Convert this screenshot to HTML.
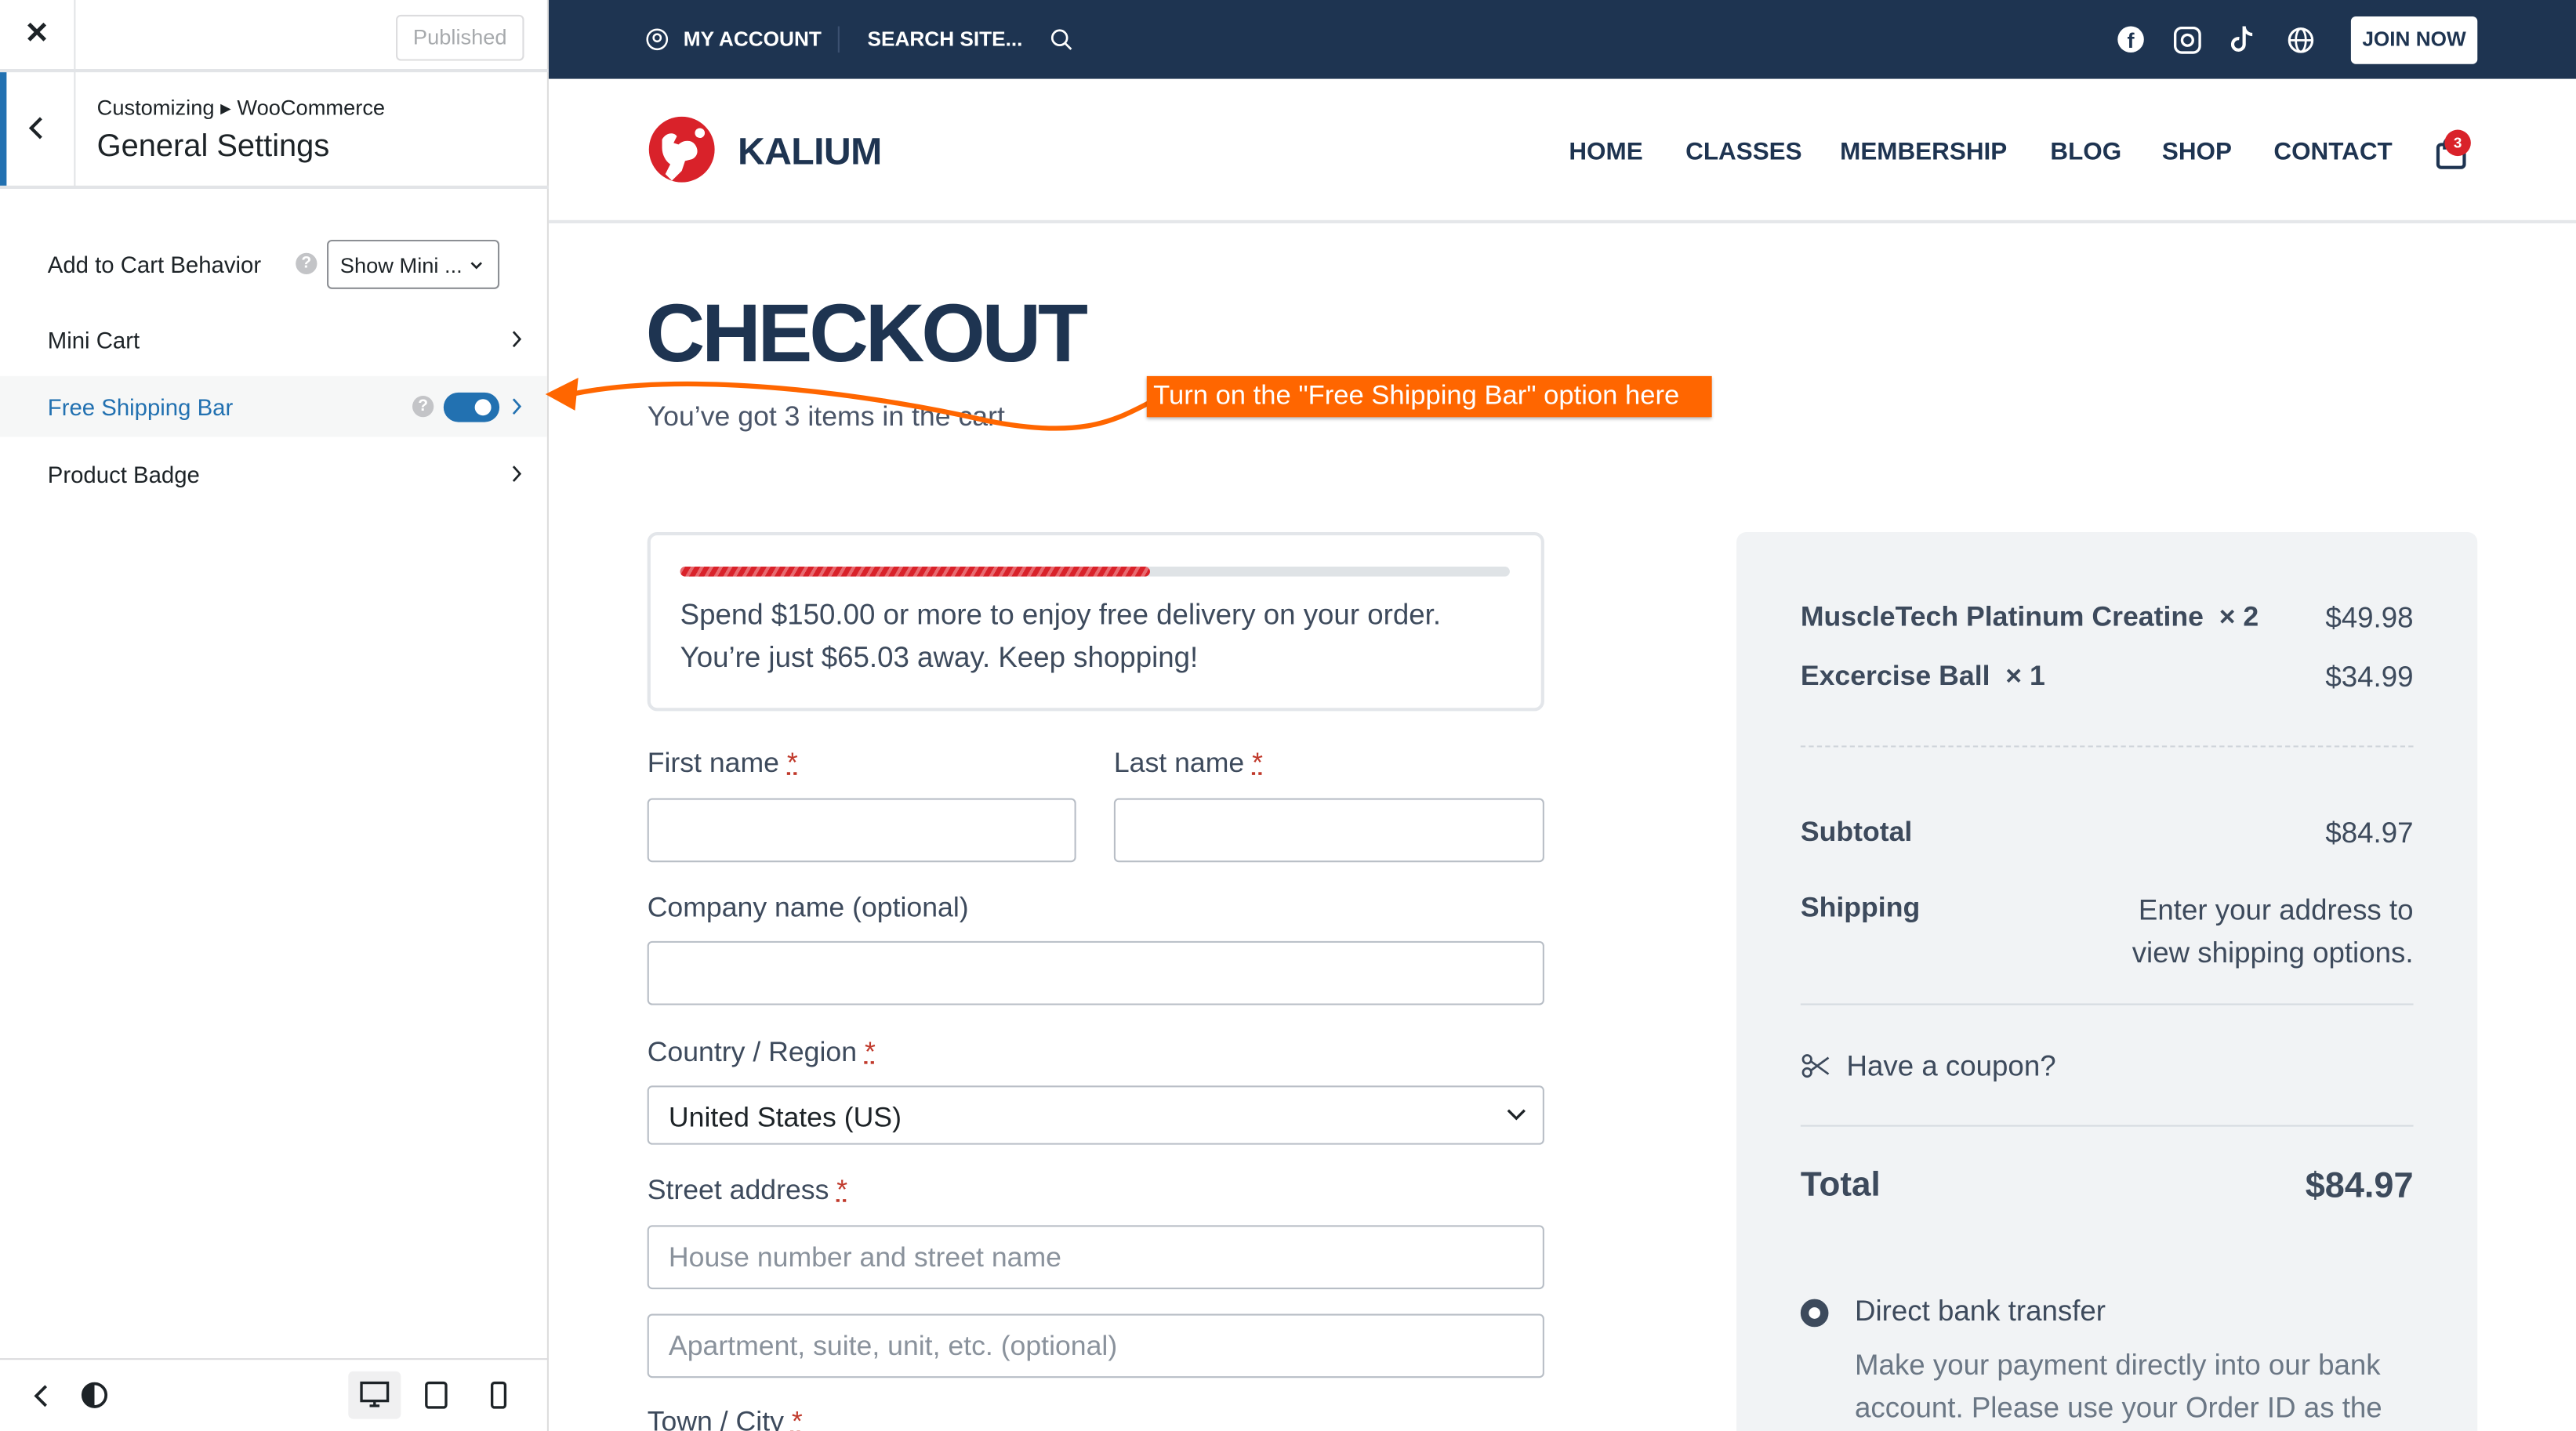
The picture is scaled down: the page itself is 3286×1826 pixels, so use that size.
<!DOCTYPE html>
<html><head><meta charset="utf-8"><style>
*{box-sizing:border-box;margin:0;padding:0}
html,body{width:3286px;height:1826px;overflow:hidden;background:#fff}
#w{width:1568px;height:872px;transform:scale(2.09566);transform-origin:0 0;position:relative;font-family:"Liberation Sans",sans-serif;overflow:hidden}
.a{position:absolute}
.side{left:0;top:0;width:334px;height:872px;background:#fff;border-right:1px solid #ddd}
.nav{color:#1e3451;font-weight:bold;font-size:15px;top:84px}
.lbl{font-size:17px;color:#3d4a5c}
.inp{border:1px solid #b8bec6;border-radius:3px;background:#fff;height:39px}
.ph{font-size:17px;color:#8a929c}
.rt{font-size:17px;color:#3d4a5c}
.req{color:#c0392b;text-decoration:underline dotted}
</style></head><body><div id="w">
<div class="a side">
 <div class="a" style="left:0;top:0;width:334px;height:44px;border-bottom:2px solid #e2e4e7"></div>
 <div class="a" style="left:45px;top:0;width:1px;height:114px;background:#e2e4e7"></div>
 <div class="a" style="left:15px;top:10px;font-size:18px;color:#1d2327;font-weight:bold">✕</div>
 <div class="a" style="left:241px;top:9px;width:78px;height:28px;border:1px solid #dcdcde;border-radius:3px;color:#a7aaad;font-size:13px;text-align:center;line-height:26px">Published</div>
 <div class="a" style="left:0;top:44px;width:4px;height:70px;background:#2271b1"></div>
 <div class="a" style="left:0;top:113px;width:334px;height:2px;background:#e2e4e7"></div>
 <svg class="a" style="left:16px;top:70px" width="12" height="16" viewBox="0 0 12 16"><path d="M9 2 L3 8 L9 14" stroke="#1d2327" stroke-width="2" fill="none"/></svg>
 <div class="a" style="left:59px;top:58px;font-size:13px;color:#1d2327">Customizing ▸ WooCommerce</div>
 <div class="a" style="left:59px;top:79px;font-size:19px;color:#1d2327">General Settings</div>
 <div class="a" style="left:29px;top:153px;font-size:14px;color:#1d2327">Add to Cart Behavior</div>
 <div class="a" style="left:180px;top:154px;width:13px;height:13px;border-radius:50%;background:#c3c4c7;color:#fff;font-size:10px;text-align:center;line-height:13px;font-weight:bold">?</div>
 <div class="a" style="left:199px;top:146px;width:105px;height:30px;border:1px solid #8c8f94;border-radius:3px;font-size:13px;color:#1d2327;padding:7px 0 0 7px">Show Mini ...<svg style="position:absolute;right:9px;top:12px" width="8" height="6"><path d="M1 1l3 3 3-3" stroke="#1d2327" stroke-width="1.3" fill="none"/></svg></div>
 <div class="a" style="left:29px;top:199px;font-size:14px;color:#1d2327">Mini Cart</div>
 <svg class="a" style="left:311px;top:201px" width="7" height="11"><path d="M1.5 1l4 4.5-4 4.5" stroke="#1d2327" stroke-width="1.3" fill="none"/></svg>
 <div class="a" style="left:0;top:229px;width:333px;height:37px;background:#f6f7f7"></div>
 <div class="a" style="left:29px;top:240px;font-size:14px;color:#2271b1">Free Shipping Bar</div>
 <div class="a" style="left:251px;top:241px;width:13px;height:13px;border-radius:50%;background:#c3c4c7;color:#fff;font-size:10px;text-align:center;line-height:13px;font-weight:bold">?</div>
 <div class="a" style="left:270px;top:239px;width:34px;height:18px;border-radius:9px;background:#2271b1"><div class="a" style="left:19px;top:4px;width:10px;height:10px;border-radius:50%;background:#fff"></div></div>
 <svg class="a" style="left:311px;top:242px" width="7" height="11"><path d="M1.5 1l4 4.5-4 4.5" stroke="#2271b1" stroke-width="1.3" fill="none"/></svg>
 <div class="a" style="left:29px;top:281px;font-size:14px;color:#1d2327">Product Badge</div>
 <svg class="a" style="left:311px;top:283px" width="7" height="11"><path d="M1.5 1l4 4.5-4 4.5" stroke="#1d2327" stroke-width="1.3" fill="none"/></svg>
 <div class="a" style="left:0;top:827px;width:334px;height:1px;background:#dcdcde"></div>
 <svg class="a" style="left:19px;top:842px" width="12" height="16"><path d="M9 2 L3 8 L9 14" stroke="#1d2327" stroke-width="1.8" fill="none"/></svg>
 <svg class="a" style="left:49px;top:841px" width="17" height="17"><circle cx="8.5" cy="8.5" r="7" stroke="#1d2327" stroke-width="1.8" fill="none"/><path d="M8.5 1.5 A7 7 0 0 0 8.5 15.5Z" fill="#1d2327"/></svg>
 <div class="a" style="left:212px;top:835px;width:32px;height:29px;background:#f0f0f1;border-radius:3px"></div>
 <svg class="a" style="left:219px;top:841px" width="18" height="17"><rect x="1" y="1" width="16" height="11" stroke="#1d2327" stroke-width="1.6" fill="none"/><path d="M6 15h6M9 12v3" stroke="#1d2327" stroke-width="1.6"/></svg>
 <svg class="a" style="left:258px;top:841px" width="15" height="17"><rect x="1.5" y="1" width="12" height="15" rx="1.5" stroke="#1d2327" stroke-width="1.6" fill="none"/></svg>
 <svg class="a" style="left:298px;top:841px" width="12" height="17"><rect x="1.5" y="1" width="8" height="15" rx="1.5" stroke="#1d2327" stroke-width="1.6" fill="none"/></svg>
</div>
<div class="a" style="left:334px;top:0;width:1234px;height:48px;background:#1e3451"></div>
<svg class="a" style="left:393px;top:17px" width="14" height="14"><circle cx="7" cy="7" r="6" stroke="#fff" stroke-width="1.2" fill="none"/><circle cx="7" cy="6" r="2.2" stroke="#fff" stroke-width="1.2" fill="none"/></svg>
<div class="a" style="left:416px;top:17px;color:#fff;font-weight:bold;font-size:12.5px">MY ACCOUNT</div>
<div class="a" style="left:510px;top:16px;width:1px;height:16px;background:#3b5070"></div>
<div class="a" style="left:528px;top:17px;color:#fff;font-weight:bold;font-size:12.5px">SEARCH SITE...</div>
<svg class="a" style="left:639px;top:17px" width="14" height="14"><circle cx="6" cy="6" r="4.5" stroke="#fff" stroke-width="1.3" fill="none"/><path d="M9.5 9.5 L13 13" stroke="#fff" stroke-width="1.3"/></svg>
<div class="a" style="left:1289px;top:16px;width:16px;height:16px;border-radius:50%;background:#fff;color:#1e3451;font-weight:bold;font-size:13px;text-align:center;line-height:18px">f</div>
<svg class="a" style="left:1323px;top:16px" width="17" height="17"><rect x="1" y="1" width="15" height="15" rx="4" stroke="#fff" stroke-width="1.6" fill="none"/><circle cx="8.5" cy="8.5" r="3.3" stroke="#fff" stroke-width="1.6" fill="none"/></svg>
<svg class="a" style="left:1358px;top:15px" width="15" height="18"><path d="M8 1v11a3.5 3.5 0 1 1-3-3.5M8 1c0 3 2.5 5 5 5" stroke="#fff" stroke-width="2" fill="none"/></svg>
<svg class="a" style="left:1392px;top:16px" width="17" height="17"><circle cx="8.5" cy="8.5" r="7" stroke="#fff" stroke-width="1.5" fill="none"/><ellipse cx="8.5" cy="8.5" rx="3" ry="7" stroke="#fff" stroke-width="1.3" fill="none"/><path d="M1.5 8.5h14" stroke="#fff" stroke-width="1.3"/></svg>
<div class="a" style="left:1431px;top:10px;width:77px;height:29px;background:#fff;border-radius:3px;color:#1e3451;font-weight:bold;font-size:12.5px;text-align:center;line-height:29px">JOIN NOW</div>
<div class="a" style="left:334px;top:134px;width:1234px;height:2px;background:#e5e7ea"></div>
<svg class="a" style="left:393px;top:71px" width="44" height="42" viewBox="0 0 44 42"><circle cx="22" cy="20" r="20" fill="#d9222a"/><path d="M10 14c2-4 7-5 9-2l-2 4 3 1c3-3 8-3 10 0 3 4 1 8-2 9l-4 1-2 6 -6 6-4-4 3-6c-3-2-5-6-5-10z" fill="#fff"/><circle cx="33" cy="10" r="3" fill="#fff"/></svg>
<div class="a" style="left:449px;top:79px;color:#1e3451;font-weight:bold;font-size:23px;letter-spacing:-0.3px">KALIUM</div>
<div class="a nav" style="left:955px">HOME</div>
<div class="a nav" style="left:1026px">CLASSES</div>
<div class="a nav" style="left:1120px">MEMBERSHIP</div>
<div class="a nav" style="left:1248px">BLOG</div>
<div class="a nav" style="left:1316px">SHOP</div>
<div class="a nav" style="left:1384px">CONTACT</div>
<svg class="a" style="left:1482px;top:83px" width="20" height="20"><rect x="2" y="5" width="16" height="14" rx="2" stroke="#1e3451" stroke-width="2" fill="none"/><path d="M6 8V5a4 4 0 0 1 8 0v3" stroke="#1e3451" stroke-width="2" fill="none"/></svg>
<div class="a" style="left:1488px;top:79px;width:16px;height:16px;border-radius:50%;background:#d9222a;color:#fff;font-size:9px;font-weight:bold;text-align:center;line-height:16px">3</div>
<div class="a" style="left:393px;top:174px;color:#1e3451;font-weight:bold;font-size:50px;letter-spacing:-2px">CHECKOUT</div>
<div class="a" style="left:394px;top:244px;font-size:17px;color:#4a5568">You’ve got 3 items in the cart</div>
<svg class="a" style="left:330px;top:220px" width="380" height="50"><path d="M18 20 C90 5 200 20 270 36 C330 48 350 35 370 25" stroke="#ff6600" stroke-width="3" fill="none"/><path d="M2 20 L22 10 L20 30Z" fill="#ff6600"/></svg>
<div class="a" style="left:698px;top:229px;width:344px;height:25px;background:#ff6600;color:#fff;font-size:16.5px;padding:3px 0 0 4px;box-shadow:0 1px 2px rgba(0,0,0,.3)">Turn on the "Free Shipping Bar" option here</div>
<div class="a" style="left:394px;top:324px;width:546px;height:109px;border:2px solid #e3e6ea;border-radius:6px"></div>
<div class="a" style="left:414px;top:345px;width:505px;height:6px;border-radius:3px;background:#dfe3e6"></div>
<div class="a" style="left:414px;top:345px;width:286px;height:6px;border-radius:3px;background:repeating-linear-gradient(-60deg,#d9222a 0 3px,#e86a70 3px 5px)"></div>
<div class="a" style="left:414px;top:361px;font-size:17.5px;color:#3d4a5c;line-height:26px">Spend $150.00 or more to enjoy free delivery on your order.<br>You’re just $65.03 away. Keep shopping!</div>
<div class="a lbl" style="left:394px;top:455px">First name <span class="req">*</span></div>
<div class="a lbl" style="left:678px;top:455px">Last name <span class="req">*</span></div>
<div class="a inp" style="left:394px;top:486px;width:261px"></div>
<div class="a inp" style="left:678px;top:486px;width:262px"></div>
<div class="a lbl" style="left:394px;top:543px">Company name (optional)</div>
<div class="a inp" style="left:394px;top:573px;width:546px"></div>
<div class="a lbl" style="left:394px;top:631px">Country / Region <span class="req">*</span></div>
<div class="a inp" style="left:394px;top:661px;width:546px;height:36px;padding:9px 0 0 12px;font-size:17px;color:#1d2327">United States (US)<svg style="position:absolute;right:10px;top:13px" width="12" height="8"><path d="M1 1l5 5 5-5" stroke="#1d2327" stroke-width="1.6" fill="none"/></svg></div>
<div class="a lbl" style="left:394px;top:715px">Street address <span class="req">*</span></div>
<div class="a inp ph" style="left:394px;top:746px;width:546px;padding:9px 0 0 12px">House number and street name</div>
<div class="a inp ph" style="left:394px;top:800px;width:546px;padding:9px 0 0 12px">Apartment, suite, unit, etc. (optional)</div>
<div class="a lbl" style="left:394px;top:856px">Town / City <span class="req">*</span></div>
<div class="a" style="left:1057px;top:324px;width:451px;height:560px;background:#f1f3f5;border-radius:6px"></div>
<div class="a" style="left:1096px;top:366px;font-size:17px;color:#3d4a5c;font-weight:bold">MuscleTech Platinum Creatine &nbsp;× 2</div>
<div class="a rt" style="right:99px;top:366px;font-size:17.5px">$49.98</div>
<div class="a" style="left:1096px;top:402px;font-size:17px;color:#3d4a5c;font-weight:bold">Excercise Ball &nbsp;× 1</div>
<div class="a rt" style="right:99px;top:402px;font-size:17.5px">$34.99</div>
<div class="a" style="left:1096px;top:454px;width:373px;border-top:1px dashed #cfd4da"></div>
<div class="a" style="left:1096px;top:497px;font-size:17px;color:#3d4a5c;font-weight:bold">Subtotal</div>
<div class="a rt" style="right:99px;top:497px;font-size:17.5px">$84.97</div>
<div class="a" style="left:1096px;top:543px;font-size:17px;color:#3d4a5c;font-weight:bold">Shipping</div>
<div class="a rt" style="right:99px;top:541px;text-align:right;line-height:26px;font-size:17.5px">Enter your address to<br>view shipping options.</div>
<div class="a" style="left:1096px;top:611px;width:373px;height:1px;background:#d6dbe0"></div>
<svg class="a" style="left:1096px;top:641px" width="18" height="16"><circle cx="4" cy="4" r="2.5" stroke="#3d4a5c" stroke-width="1.3" fill="none"/><circle cx="4" cy="12" r="2.5" stroke="#3d4a5c" stroke-width="1.3" fill="none"/><path d="M6 5l11 8M6 11l11-8" stroke="#3d4a5c" stroke-width="1.3"/></svg>
<div class="a rt" style="left:1124px;top:639px;font-size:17.5px">Have a coupon?</div>
<div class="a" style="left:1096px;top:685px;width:373px;height:1px;background:#d6dbe0"></div>
<div class="a" style="left:1096px;top:710px;font-size:21px;color:#3d4a5c;font-weight:bold">Total</div>
<div class="a" style="right:99px;top:710px;font-size:21.5px;color:#3d4a5c;font-weight:bold">$84.97</div>
<div class="a" style="left:1096px;top:791px;width:17px;height:17px;border-radius:50%;border:5px solid #3d4a5c;background:#fff"></div>
<div class="a rt" style="left:1129px;top:788px;font-size:17.5px">Direct bank transfer</div>
<div class="a" style="left:1129px;top:818px;font-size:17.5px;color:#6b7785;line-height:26px">Make your payment directly into our bank<br>account. Please use your Order ID as the</div>
</div></body></html>
